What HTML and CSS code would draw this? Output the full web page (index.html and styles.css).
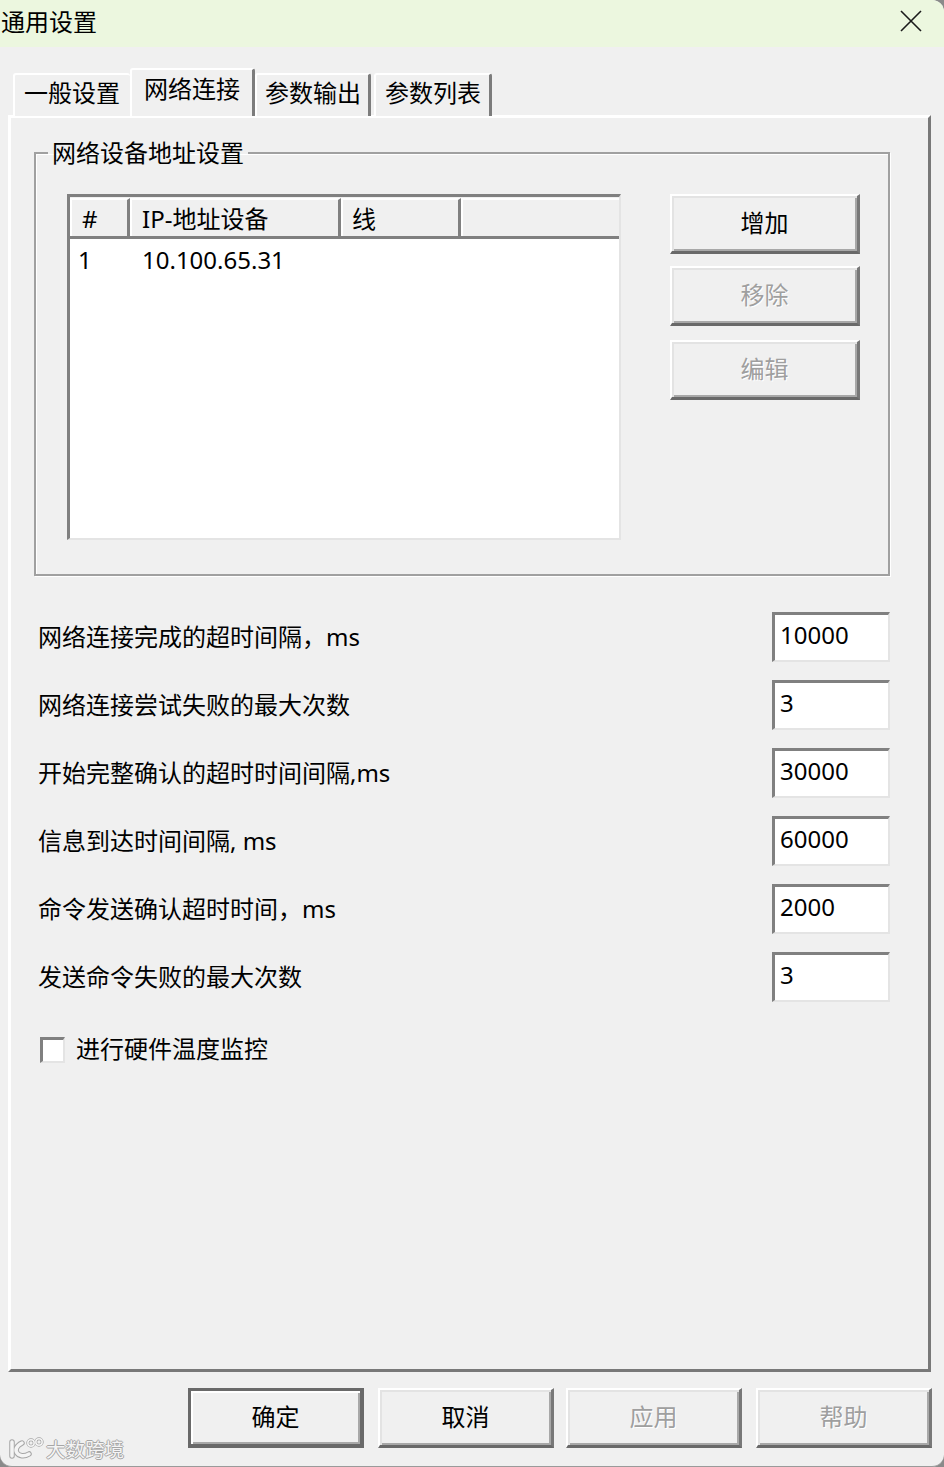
FILE: index.html
```html
<!DOCTYPE html>
<html lang="zh">
<head>
<meta charset="utf-8">
<title>通用设置</title>
<link rel="stylesheet" href="styles.css">
</head>
<body>
<div class="window">
  <header class="titlebar">
    <span class="title">通用设置</span>
    <svg class="close" width="22" height="22" viewBox="0 0 22 22"><path d="M1 1L21 21M21 1L1 21" stroke="#1a1a1a" stroke-width="1.6" fill="none"/></svg>
  </header>

  <nav class="tabs">
    <div class="tab tab-first">一般设置</div>
    <div class="tab tab-active">网络连接</div>
    <div class="tab tab-third">参数输出</div>
    <div class="tab tab-fourth">参数列表</div>
  </nav>

  <main class="panel">
    <fieldset class="group">
      <legend class="legend">网络设备地址设置</legend>
      <div class="group-body">
        <div class="list">
          <div class="list-head">
            <div class="col col-num">#</div>
            <div class="col col-ip">IP-地址设备</div>
            <div class="col col-line">线</div>
            <div class="col col-rest"></div>
          </div>
          <div class="list-row">
            <span class="cell-num">1</span>
            <span class="cell-ip">10.100.65.31</span>
          </div>
        </div>
        <div class="side-buttons">
          <button class="btn btn-side">增加</button>
          <button class="btn btn-side btn-off">移除</button>
          <button class="btn btn-side btn-off">编辑</button>
        </div>
      </div>
    </fieldset>

    <div class="fields">
      <div class="field"><span class="label">网络连接完成的超时间隔，ms</span><div class="input">10000</div></div>
      <div class="field"><span class="label">网络连接尝试失败的最大次数</span><div class="input">3</div></div>
      <div class="field"><span class="label">开始完整确认的超时时间间隔,ms</span><div class="input">30000</div></div>
      <div class="field"><span class="label">信息到达时间间隔, ms</span><div class="input">60000</div></div>
      <div class="field"><span class="label">命令发送确认超时时间，ms</span><div class="input">2000</div></div>
      <div class="field"><span class="label">发送命令失败的最大次数</span><div class="input">3</div></div>
    </div>

    <label class="check">
      <span class="check-box"></span>
      <span class="check-text">进行硬件温度监控</span>
    </label>
  </main>

  <footer class="footer">
    <button class="btn btn-foot btn-default">确定</button>
    <button class="btn btn-foot">取消</button>
    <button class="btn btn-foot btn-off btn-apply">应用</button>
    <button class="btn btn-foot btn-off">帮助</button>
  </footer>

  <div class="watermark">
    <svg class="watermark-logo" width="36" height="26" viewBox="0 0 36 26">
      <g fill="none" stroke="#a6a6a6" stroke-width="5.5" stroke-linecap="round"><path d="M4 5V19"/><path d="M14 6C8 9 7 13 9 16C11 19 16 20 21 17"/></g>
      <g fill="none" stroke="#f4f4f4" stroke-width="3.5" stroke-linecap="round"><path d="M4 5V19"/><path d="M14 6C8 9 7 13 9 16C11 19 16 20 21 17"/></g>
      <g fill="none" stroke="#a6a6a6" stroke-width="3"><circle cx="23" cy="6" r="3.2"/><circle cx="31" cy="5" r="3.2"/></g>
      <g fill="none" stroke="#f4f4f4" stroke-width="1.5"><circle cx="23" cy="6" r="3.2"/><circle cx="31" cy="5" r="3.2"/></g>
    </svg>
    <span class="watermark-text">大数跨境</span>
  </div>
</div>
</body>
</html>
```
FILE: styles.css
```css
* { box-sizing: border-box; }
html { background: #8a8a8a; }
body {
  margin: 0;
  width: 944px;
  height: 1467px;
  font-family: "Noto Sans", "Noto Sans CJK SC", sans-serif;
  font-size: 24px;
  color: #000;
}
.window {
  position: relative;
  width: 944px;
  height: 1467px;
  background: #f0f0f0;
  border-bottom: 1px solid #9a9a9a;
  border-radius: 0 12px 12px 12px;
  overflow: hidden;
}
.titlebar {
  height: 47px;
  background: #ecf7df;
  display: flex;
  align-items: flex-start;
  justify-content: space-between;
  padding: 10px 22px 0 1px;
}
.title { line-height: 24px; }
.close { display: block; }

.tabs {
  display: flex;
  align-items: flex-end;
  height: 69px;
  margin-bottom: -1px;
  padding-left: 13px;
  position: relative;
  z-index: 1;
}
.tab {
  height: 43px;
  padding-left: 9px;
  background: #f0f0f0;
  border-top: 2px solid #fff;
  border-left: 2px solid #fff;
  border-right: 3px solid #7c7c7c;
  border-radius: 3px 3px 0 0;
  line-height: 35px;
  white-space: nowrap;
}
.tab-first { width: 117px; border-right: 0; }
.tab-active { width: 125px; height: 48px; line-height: 37px; padding-left: 12px; }
.tab-third { width: 116px; padding-left: 8px; }
.tab-fourth { width: 118px; margin-left: 3px; padding-left: 9px; }

.panel {
  margin-left: 8px;
  width: 923px;
  height: 1257px;
  border-top: 3px solid #fff;
  border-left: 3px solid #fff;
  border-right: 3px solid #787878;
  border-bottom: 3px solid #787878;
  padding: 18px 38px 0 23px;
}
.group {
  margin: 0;
  width: 856px;
  height: 440px;
  padding: 24px 28px 0 31px;
  border: 2px solid #a0a0a0;
  box-shadow: inset 1px 1px 0 #fff, 1px 1px 0 #fff;
  min-width: 0;
}
.legend {
  margin-left: -19px;
  padding: 0 4px;
  line-height: 34px;
}
.group-body {
  display: flex;
  justify-content: space-between;
}
.list {
  width: 554px;
  height: 346px;
  background: #fff;
  border-top: 3px solid #808080;
  border-left: 3px solid #808080;
  border-right: 2px solid #e4e4e4;
  border-bottom: 2px solid #e4e4e4;
}
.list-head {
  display: flex;
  height: 42px;
  padding-top: 1px;
  background: #f0f0f0;
  border-bottom: 3px solid #808080;
}
.col {
  line-height: 38px;
  border-top: 2px solid #fff;
  border-left: 2px solid #fff;
  border-right: 3px solid #808080;
  white-space: nowrap;
}
.col-num { width: 60px; padding-left: 10px; }
.col-ip { width: 211px; padding-left: 10px; }
.col-line { width: 120px; padding-left: 9px; }
.col-rest { flex: 1; border-right: 0; }
.list-row {
  display: flex;
  line-height: 42px;
  padding-left: 8px;
}
.cell-num { width: 64px; }

.side-buttons {
  display: flex;
  flex-direction: column;
  width: 190px;
}
.btn {
  display: block;
  padding: 0 0 4px;
  height: 60px;
  font: inherit;
  color: #000;
  background: #f0f0f0;
  border-top: 2px solid #fff;
  border-left: 2px solid #fff;
  border-right: 3px solid #787878;
  border-bottom: 3px solid #696969;
  box-shadow: inset 2px 2px 0 #e3e3e3, inset -2px -2px 0 #a8a8a8;
}
.btn-side { width: 190px; margin-bottom: 12px; }
.btn-side + .btn-side + .btn-side { margin-top: 2px; }
.btn-off {
  color: #9f9f9f;
  text-shadow: 1px 1px 0 #fff;
}

.fields {
  margin-top: 36px;
  display: flex;
  flex-direction: column;
  gap: 18px;
}
.field {
  display: flex;
  align-items: center;
  justify-content: space-between;
  height: 50px;
  padding-left: 4px;
}
.label { white-space: nowrap; padding-bottom: 4px; }
.input {
  width: 118px;
  height: 50px;
  background: #fff;
  border-top: 3px solid #808080;
  border-left: 3px solid #808080;
  border-right: 2px solid #e4e4e4;
  border-bottom: 2px solid #e4e4e4;
  padding-left: 5px;
  line-height: 40px;
}
.check {
  display: flex;
  align-items: center;
  margin-top: 32px;
  padding-left: 6px;
  height: 32px;
}
.check-box {
  width: 25px;
  height: 26px;
  background: #fff;
  border-top: 3px solid #808080;
  border-left: 3px solid #808080;
  border-right: 2px solid #e4e4e4;
  border-bottom: 2px solid #e4e4e4;
}
.check-text { margin-left: 11px; padding-bottom: 6px; }

.footer {
  display: flex;
  padding: 16px 0 0 188px;
  gap: 14px;
}
.btn-foot { width: 176px; padding-bottom: 5px; }
.btn-apply { margin-left: -2px; }
.btn-default {
  border: 3px solid #696969;
  border-bottom-width: 4px;
  border-right-width: 4px;
  box-shadow: inset 2px 2px 0 #fff, inset -2px -2px 0 #a8a8a8;
}

.watermark {
  position: absolute;
  left: 8px;
  bottom: 3px;
  display: flex;
  align-items: center;
  gap: 2px;
  height: 26px;
}
.watermark-logo { display: block; }
.watermark-text {
  font-size: 19.5px;
  line-height: 26px;
  color: #f4f4f4;
  text-shadow: 1px 0 0 #a6a6a6, -1px 0 0 #a6a6a6, 0 1px 0 #a6a6a6, 0 -1px 0 #a6a6a6;
}
```
